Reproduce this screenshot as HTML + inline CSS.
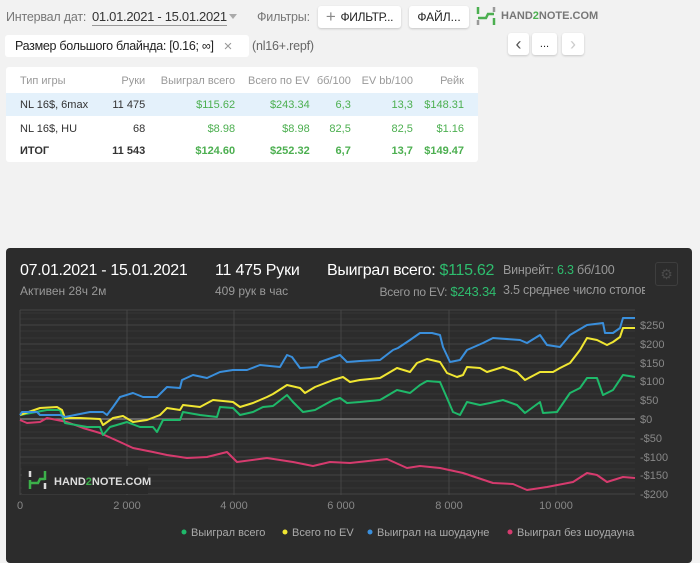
<!DOCTYPE html>
<html><head><meta charset="utf-8"><style>
*{margin:0;padding:0;box-sizing:border-box}
body{width:700px;height:557px;background:#f2f2f2;font-family:"Liberation Sans",sans-serif;position:relative;overflow:hidden;color:#333}
.a{position:absolute;white-space:nowrap}
.btn{position:absolute;background:#fff;border-radius:3px;box-shadow:0 1px 2px rgba(0,0,0,.18);font-size:12px;color:#222;display:flex;align-items:center;justify-content:center;white-space:nowrap}
table{border-collapse:collapse;font-size:11px}
.g{color:#4caf50}
td{height:20px;padding:0}
</style></head><body>
<div class="a" style="left:6px;top:10px;font-size:12.5px;color:#777;letter-spacing:-0.2px">Интервал дат:</div>
<div class="a" style="left:92px;top:9px;font-size:13px;color:#333;border-bottom:1px solid #999;padding-bottom:1px;letter-spacing:-0.3px">01.01.2021 - 15.01.2021</div>
<div class="a" style="left:229px;top:14px;width:0;height:0;border-left:4px solid transparent;border-right:4px solid transparent;border-top:5px solid #aaa"></div>
<div class="a" style="left:257px;top:10px;font-size:12.5px;color:#777;letter-spacing:-0.2px">Фильтры:</div>
<div class="btn" style="left:318px;top:6px;width:83px;height:22px;letter-spacing:-0.3px"><span style="color:#888;font-size:17px;margin-right:5px">+</span>ФИЛЬТР...</div>
<div class="btn" style="left:409px;top:6px;width:60px;height:22px">ФАЙЛ...</div>
<svg class="a" style="left:476px;top:6px" width="20" height="20"><path d="M2 1v7M18 12v7" stroke="#4caf50" stroke-width="2.5"/><path d="M2 12h8l2-4h6" stroke="#4caf50" stroke-width="2.5" fill="none"/><path d="M2 14v5M18 1v5" stroke="#999" stroke-width="2.5"/></svg>
<div class="a" style="left:501px;top:10px;font-size:11px;font-weight:bold;color:#777">HAND<span style="color:#4caf50">2</span>NOTE.COM</div>
<div class="btn" style="left:5px;top:35px;width:244px;height:22px;justify-content:flex-start;padding-left:10px;font-size:12.5px;letter-spacing:-0.3px;box-shadow:none">Размер большого блайнда: [0.16; ∞]<span style="color:#999;margin-left:10px;font-size:15px">×</span></div>
<div class="a" style="left:252px;top:39px;font-size:12.5px;color:#666;letter-spacing:-0.2px">(nl16+.repf)</div>
<div class="btn" style="left:508px;top:33px;width:21px;height:22px;font-size:18px;color:#555">‹</div>
<div class="btn" style="left:532px;top:33px;width:25px;height:22px;font-size:11px">...</div>
<div class="btn" style="left:562px;top:33px;width:22px;height:22px;font-size:18px;color:#ccc">›</div>
<div class="a" style="left:6px;top:67px;width:472px;height:95px;background:#fff;border-radius:3px">
<table style="width:472px;margin-top:2px">
<tr style="color:#999"><td style="padding-left:14px;height:24px">Тип игры</td><td align="right">Руки</td><td align="right">Выиграл всего</td><td align="right">Всего по EV</td><td align="right">бб/100</td><td align="right">EV bb/100</td><td align="right" style="padding-right:14px">Рейк</td></tr>
<tr style="background:#e4f1fb;height:23px"><td style="padding-left:14px">NL 16$, 6max</td><td align="right">11 475</td><td align="right" class="g">$115.62</td><td align="right" class="g">$243.34</td><td align="right" class="g">6,3</td><td align="right" class="g">13,3</td><td align="right" class="g" style="padding-right:14px">$148.31</td></tr>
<tr style="height:25px"><td style="padding-left:14px">NL 16$, HU</td><td align="right">68</td><td align="right" class="g">$8.98</td><td align="right" class="g">$8.98</td><td align="right" class="g">82,5</td><td align="right" class="g">82,5</td><td align="right" class="g" style="padding-right:14px">$1.16</td></tr>
<tr style="font-weight:bold"><td style="padding-left:14px">ИТОГ</td><td align="right">11 543</td><td align="right" class="g">$124.60</td><td align="right" class="g">$252.32</td><td align="right" class="g">6,7</td><td align="right" class="g">13,7</td><td align="right" class="g" style="padding-right:14px">$149.47</td></tr>
</table></div>
<div class="a" style="left:6px;top:248px;width:686px;height:315px;background:#2c2c2c;border-radius:4px"></div>
<div class="a" style="left:20px;top:262px;font-size:16px;color:#fff;letter-spacing:-0.3px">07.01.2021 - 15.01.2021</div>
<div class="a" style="left:20px;top:284px;font-size:12px;color:#999">Активен 28ч 2м</div>
<div class="a" style="left:215px;top:262px;font-size:16px;color:#fff;letter-spacing:-0.2px">11 475 Руки</div>
<div class="a" style="left:215px;top:284px;font-size:12px;color:#999">409 рук в час</div>
<div class="a" style="left:327px;top:262px;font-size:16px;color:#fff;letter-spacing:-0.3px">Выиграл всего: <span style="color:#2ebd6e">$115.62</span></div>
<div class="a" style="right:204px;top:284px;font-size:12px;color:#999;letter-spacing:-0.2px">Всего по EV: <span style="color:#2ebd6e;font-size:13px">$243.34</span></div>
<div class="a" style="left:503px;top:263px;font-size:12.5px;color:#999;letter-spacing:-0.2px">Винрейт: <span style="color:#2ebd6e">6.3</span> бб/100</div>
<div class="a" style="left:503px;top:283px;font-size:12.5px;color:#999;width:142px;overflow:hidden;letter-spacing:-0.2px">3.5 среднее число столов</div>
<div class="a" style="left:655px;top:262px;width:23px;height:24px;border:1px solid #3e3e3e;border-radius:3px;color:#4a4a4a;font-size:14px;text-align:center;line-height:22px">⚙</div>
<svg class="a" style="left:0;top:0" width="700" height="557">
<g stroke="#363636" stroke-width="1">
<path d="M20 313H635M20 319H635M20 331H635M20 338H635M20 350H635M20 356H635M20 369H635M20 375H635M20 387H635M20 394H635M20 406H635M20 413H635M20 425H635M20 432H635M20 444H635M20 450H635M20 463H635M20 469H635M20 481H635M20 488H635"/>
</g>
<g stroke="#454545" stroke-width="1">
<path d="M20 310H635M20 325H635M20 344H635M20 363H635M20 381H635M20 400H635M20 438H635M20 457H635M20 475H635M20 494H635M20 310V495M127 310V495M234 310V495M341 310V495M449 310V495M556 310V495"/>
</g>
<path d="M20 419H635" stroke="#888" stroke-width="1.2"/>
<g fill="none" stroke-width="2" stroke-linejoin="round">
<polyline stroke="#d63b6e" points="20,420 27,423 40,422 47,418 67,422 83,428 100,433 120,442 133,448 153,452 167,455 187,458 207,457 227,452 237,462 267,458 293,462 313,466 330,462 350,463 387,459 407,468 420,466 440,468 463,473 493,483 513,484 527,490 547,487 573,482 587,473 597,475 607,482 623,477 635,478"/>
<polyline stroke="#1fb96a" points="20,415 47,410 60,410 65,423 87,427 100,427 103,435 110,427 127,422 140,427 153,427 157,432 163,420 180,420 183,412 200,415 217,417 220,407 233,408 240,415 253,412 263,407 273,406 287,395 293,402 303,412 315,410 333,400 340,398 347,403 360,402 380,400 397,390 410,393 420,385 427,381 440,382 447,398 453,412 460,415 467,402 480,405 490,403 503,400 517,405 525,413 540,402 543,413 557,412 570,393 580,388 587,378 597,378 603,395 613,390 623,375 635,377"/>
<polyline stroke="#f0e632" points="20,415 40,408 57,407 62,410 65,418 80,418 100,419 103,425 113,418 123,416 133,422 147,420 160,415 167,408 180,410 183,405 200,407 213,400 233,402 240,407 253,403 267,397 273,394 287,385 300,388 305,393 315,387 333,380 343,377 350,382 360,380 380,378 397,368 410,372 417,363 427,359 440,362 447,373 457,377 463,375 467,367 480,368 487,372 503,367 517,372 525,380 540,372 553,372 560,368 570,363 580,350 587,338 597,340 607,345 613,342 620,337 623,328 635,328"/>
<polyline stroke="#3a8fdc" points="20,415 22,412 37,412 40,415 60,415 65,417 90,412 103,412 107,415 113,407 120,397 133,393 143,397 157,397 167,387 180,388 182,380 193,375 207,378 220,372 233,370 247,370 260,365 280,367 287,355 292,357 300,368 317,367 320,362 340,355 347,362 360,361 380,360 393,350 398,348 410,340 420,333 432,333 440,335 443,347 450,362 460,360 467,350 483,343 493,338 520,340 527,343 540,335 547,345 560,347 570,335 587,325 603,323 605,333 613,333 620,328 623,318 635,318"/>
</g>
<rect x="22" y="466" width="126" height="28" fill="#2a2a2a"/>
<path d="M30 471v6M45 483v6" stroke="#ddd" stroke-width="2.5"/>
<path d="M30 480v9M45 471v9" stroke="#3cb04a" stroke-width="2.5"/>
<path d="M30 483h8l2-4h5" stroke="#3cb04a" stroke-width="2.5" fill="none"/>
<text x="54" y="485" font-size="11" font-weight="bold" fill="#ddd" font-family="Liberation Sans">HAND<tspan fill="#3cb04a">2</tspan>NOTE.COM</text>
<g font-size="11" fill="#888" font-family="Liberation Sans">
<text x="640" y="329">$250</text><text x="640" y="348">$200</text><text x="640" y="367">$150</text><text x="640" y="385">$100</text><text x="640" y="404">$50</text><text x="640" y="423">$0</text><text x="640" y="442">-$50</text><text x="640" y="461">-$100</text><text x="640" y="479">-$150</text><text x="640" y="498">-$200</text>
<g text-anchor="middle"><text x="20" y="509">0</text><text x="127" y="509">2 000</text><text x="234" y="509">4 000</text><text x="341" y="509">6 000</text><text x="449" y="509">8 000</text><text x="556" y="509">10 000</text></g>
</g>
<g font-size="11" fill="#aaa" font-family="Liberation Sans">
<circle cx="184" cy="532" r="2.5" fill="#1fb96a"/><text x="191" y="536">Выиграл всего</text>
<circle cx="285" cy="532" r="2.5" fill="#f0e632"/><text x="292" y="536">Всего по EV</text>
<circle cx="370" cy="532" r="2.5" fill="#3a8fdc"/><text x="377" y="536">Выиграл на шоудауне</text>
<circle cx="510" cy="532" r="2.5" fill="#d63b6e"/><text x="517" y="536">Выиграл без шоудауна</text>
</g>
</svg>
</body></html>
